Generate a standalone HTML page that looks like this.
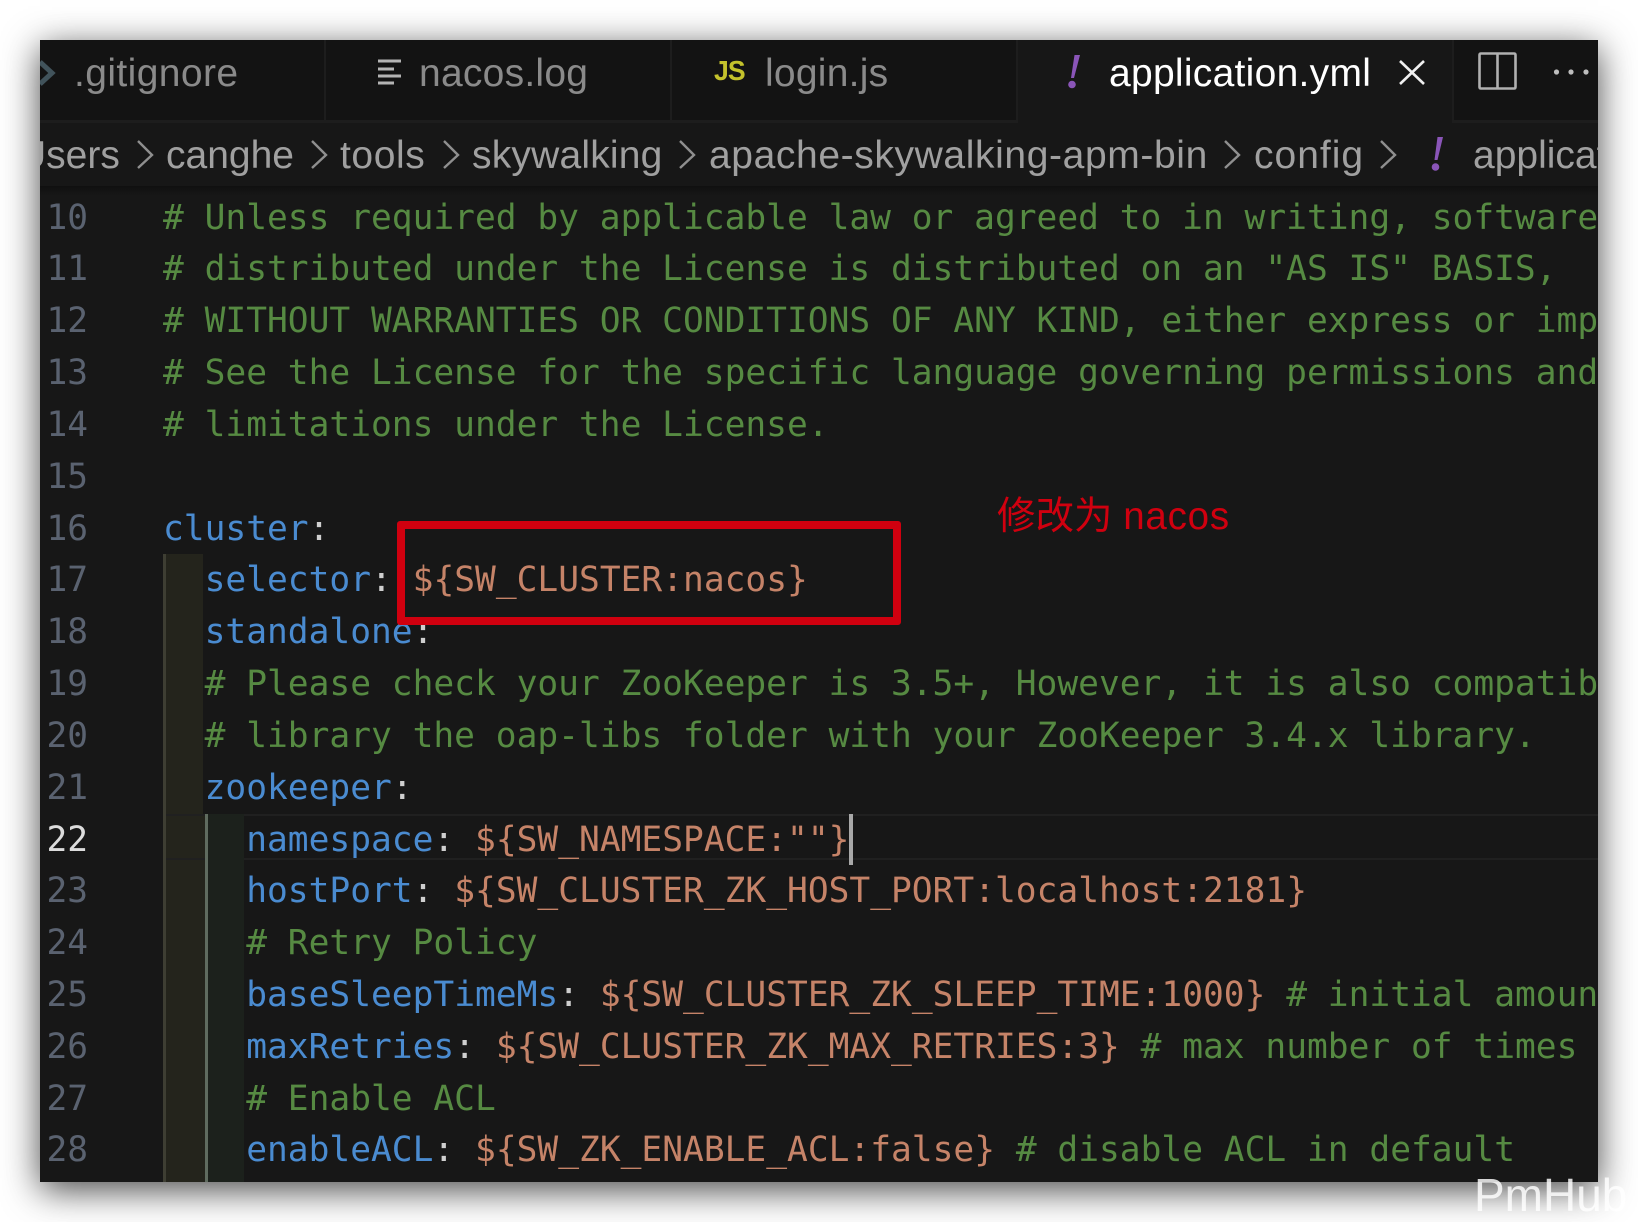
<!DOCTYPE html>
<html><head><meta charset="utf-8"><style>
html,body{margin:0;padding:0;background:#fff}
#p{position:relative;width:1638px;height:1222px;overflow:hidden;background:#fff}
#w{position:absolute;left:40px;top:40px;width:1558px;height:1142px;background:#171717;box-shadow:0 8px 34px rgba(0,0,0,.72);overflow:hidden}
.a{position:absolute}
.t{position:absolute;font:39px/46px "Liberation Sans",sans-serif;white-space:pre;color:#8a8a8a}
.b{color:#a0a0a0;top:133px}
.l{position:absolute;left:163px;height:52px;line-height:52px;font-family:"DejaVu Sans Mono",monospace;font-size:34.55px;white-space:pre;color:#568a42}
.n{position:absolute;left:39px;width:49px;text-align:right;height:52px;line-height:52px;font-family:"DejaVu Sans Mono",monospace;font-size:34.5px;color:#5a6270}
.k{color:#4a8bd0}.c{color:#cfcfcf}.v{color:#c58368}
#clip{position:absolute;left:40px;top:40px;width:1558px;height:1142px;overflow:hidden}
#in{position:absolute;left:-40px;top:-40px;width:1638px;height:1222px}
</style></head><body><div id="p">
<div id="w"></div>
<div id="clip"><div id="in">
<div class="a" style="left:40px;top:40px;width:1558px;height:80px;background:#131313"></div>
<div class="a" style="left:40px;top:120px;width:1558px;height:3px;background:#1d1d1d"></div>
<div class="a" style="left:324px;top:40px;width:2px;height:80px;background:#1d1d1d"></div>
<div class="a" style="left:670px;top:40px;width:2px;height:80px;background:#1d1d1d"></div>
<div class="a" style="left:1016px;top:40px;width:436px;height:83px;background:#171717;border-left:2px solid #1d1d1d;box-sizing:border-box"></div>
<div class="a" style="left:1452px;top:40px;width:2px;height:83px;background:#1d1d1d"></div>
<div class="a" style="left:40px;top:186px;width:1558px;height:10px;background:linear-gradient(#101010,#171717)"></div>

<svg class="a" style="left:0;top:0" width="1638" height="200" viewBox="0 0 1638 200" fill="none">
<path d="M40 62 L52 73 L40 84" stroke="#41535b" stroke-width="5"/>
<path d="M378 61H401M378 69H394M378 76H401M378 83H394" stroke="#b4b4b4" stroke-width="3"/>
<path d="M1400 61L1424 84M1424 61L1400 84" stroke="#f0f0f0" stroke-width="2.6"/>
<path d="M1481 53.500H1514Q1515.500 53.500 1515.500 55V87Q1515.500 88.500 1514 88.500H1481Q1479.500 88.500 1479.500 87V55Q1479.500 53.500 1481 53.500ZM1497.500 53.500V88.500" stroke="#b0b0b0" stroke-width="2.600"/>
<circle cx="1556.500" cy="72" r="2.600" fill="#bdbdbd"/><circle cx="1571" cy="72" r="2.600" fill="#bdbdbd"/><circle cx="1586" cy="72" r="2.600" fill="#bdbdbd"/>
<path d="M138 141L152 155L138 168M312 141L326 155L312 168M444 141L458 155L444 168M680 141L694 155L680 168M1225 141L1239 155L1225 168M1381 141L1395 155L1381 168" stroke="#8f8f8f" stroke-width="2.400"/>
<path d="M1080 55L1074 78H1071L1074.500 55Z" fill="#8a55b8"/><circle cx="1072" cy="84.500" r="3.800" fill="#8a55b8"/>
<path d="M1443 137L1437.500 160H1434.500L1437.500 137Z" fill="#8a55b8"/><circle cx="1435.500" cy="167" r="3.800" fill="#8a55b8"/>
</svg>

<div class="t" style="left:74px;top:51px;letter-spacing:.4px">.gitignore</div>
<div class="t" style="left:419px;top:51px;letter-spacing:.25px">nacos.log</div>
<div class="a" style="left:714px;top:55px;font:bold 28px/32px 'Liberation Sans',sans-serif;color:#c4c22c;letter-spacing:-1px;transform:scaleX(.95);transform-origin:left">JS</div>
<div class="t" style="left:765px;top:51px;letter-spacing:.25px">login.js</div>
<div class="t" style="left:1109px;top:51px;color:#fff;letter-spacing:.28px">application.yml</div>

<div class="t b" style="left:18px">Users</div>
<div class="t b" style="left:166px">canghe</div>
<div class="t b" style="left:340px;letter-spacing:.6px">tools</div>
<div class="t b" style="left:472px;letter-spacing:.2px">skywalking</div>
<div class="t b" style="left:709px;letter-spacing:.62px">apache-skywalking-apm-bin</div>
<div class="t b" style="left:1254px;letter-spacing:1px">config</div>
<div class="t b" style="left:1473px">application.yml</div>

<div class="a" style="left:163px;top:554px;width:3px;height:628px;background:#3e3e33"></div>
<div class="a" style="left:166px;top:554px;width:37px;height:260px;background:#24241c"></div>
<div class="a" style="left:166px;top:814px;width:39px;height:368px;background:#24241c"></div>
<div class="a" style="left:166px;top:814px;width:1432px;height:46px;border-top:2px solid #202020;border-bottom:2px solid #202020;box-sizing:border-box"></div>
<div class="a" style="left:205px;top:814px;width:3px;height:368px;background:#5f6b5f"></div>
<div class="a" style="left:208px;top:814px;width:36px;height:368px;background:#1c211c"></div>

<div class="n" style="top:192px">10</div><div class="l" style="top:192px"># Unless required by applicable law or agreed to in writing, software</div>
<div class="n" style="top:243px">11</div><div class="l" style="top:243px"># distributed under the License is distributed on an "AS IS" BASIS,</div>
<div class="n" style="top:295px">12</div><div class="l" style="top:295px"># WITHOUT WARRANTIES OR CONDITIONS OF ANY KIND, either express or implied.</div>
<div class="n" style="top:347px">13</div><div class="l" style="top:347px"># See the License for the specific language governing permissions and</div>
<div class="n" style="top:399px">14</div><div class="l" style="top:399px"># limitations under the License.</div>
<div class="n" style="top:451px">15</div>
<div class="n" style="top:503px">16</div><div class="l" style="top:503px"><span class="k">cluster</span><span class="c">:</span></div>
<div class="n" style="top:554px">17</div><div class="l" style="top:554px">  <span class="k">selector</span><span class="c">:</span> <span class="v">${SW_CLUSTER:nacos}</span></div>
<div class="n" style="top:606px">18</div><div class="l" style="top:606px">  <span class="k">standalone</span><span class="c">:</span></div>
<div class="n" style="top:658px">19</div><div class="l" style="top:658px">  # Please check your ZooKeeper is 3.5+, However, it is also compatible</div>
<div class="n" style="top:710px">20</div><div class="l" style="top:710px">  # library the oap-libs folder with your ZooKeeper 3.4.x library.</div>
<div class="n" style="top:762px">21</div><div class="l" style="top:762px">  <span class="k">zookeeper</span><span class="c">:</span></div>
<div class="n" style="top:814px;color:#dcdcdc">22</div><div class="l" style="top:814px">    <span class="k">namespace</span><span class="c">:</span> <span class="v">${SW_NAMESPACE:""}</span></div>
<div class="a" style="left:849px;top:814px;width:4px;height:51px;background:#a8a8a8"></div>
<div class="n" style="top:865px">23</div><div class="l" style="top:865px">    <span class="k">hostPort</span><span class="c">:</span> <span class="v">${SW_CLUSTER_ZK_HOST_PORT:localhost:2181}</span></div>
<div class="n" style="top:917px">24</div><div class="l" style="top:917px">    # Retry Policy</div>
<div class="n" style="top:969px">25</div><div class="l" style="top:969px">    <span class="k">baseSleepTimeMs</span><span class="c">:</span> <span class="v">${SW_CLUSTER_ZK_SLEEP_TIME:1000}</span> # initial amount</div>
<div class="n" style="top:1021px">26</div><div class="l" style="top:1021px">    <span class="k">maxRetries</span><span class="c">:</span> <span class="v">${SW_CLUSTER_ZK_MAX_RETRIES:3}</span> # max number of times</div>
<div class="n" style="top:1073px">27</div><div class="l" style="top:1073px">    # Enable ACL</div>
<div class="n" style="top:1124px">28</div><div class="l" style="top:1124px">    <span class="k">enableACL</span><span class="c">:</span> <span class="v">${SW_ZK_ENABLE_ACL:false}</span> # disable ACL in default</div>

<div class="a" style="left:397px;top:521px;width:504px;height:104px;border:8px solid #d0000f;border-radius:3px;box-sizing:border-box"></div>
<div class="a" style="left:997px;top:494px;font:38.500px/46px 'Liberation Sans','Noto Sans CJK SC',sans-serif;color:#d0000f;white-space:pre">修改为 <span style="letter-spacing:.8px">nacos</span></div>
</div></div>
<div class="a" style="left:1474px;top:1167px;font:46px/56px 'Liberation Sans',sans-serif;color:rgba(255,255,255,.82);white-space:pre">PmHub</div>
</div></body></html>
